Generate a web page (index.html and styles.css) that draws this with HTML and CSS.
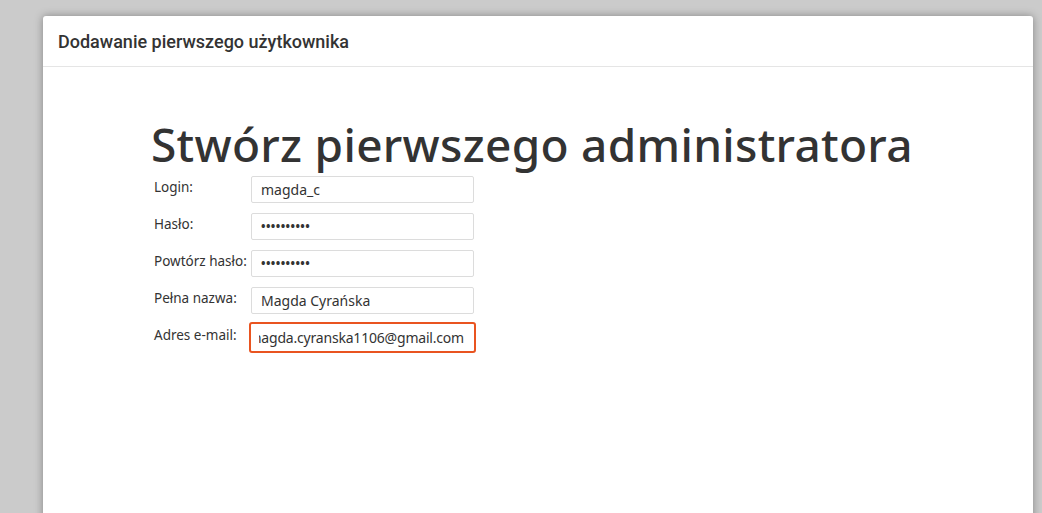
FILE: index.html
```html
<!DOCTYPE html>
<html lang="pl">
<head>
<meta charset="utf-8">
<link rel="stylesheet" href="styles.css">
</head>
<body>
<div class="dialog">
  <div class="dialog-header">Dodawanie pierwszego użytkownika</div>
  <div class="dialog-body">
    <h1 class="title">Stwórz pierwszego administratora</h1>
    <form class="form">
      <label class="label">Login:</label>
      <div class="field">magda_c</div>
      <label class="label">Hasło:</label>
      <div class="field dots">••••••••••</div>
      <label class="label">Powtórz hasło:</label>
      <div class="field dots">••••••••••</div>
      <label class="label">Pełna nazwa:</label>
      <div class="field">Magda Cyrańska</div>
      <label class="label">Adres e-mail:</label>
      <div class="field focused"><div class="scroll-box"><span class="scroll">magda.cyranska1106@gmail.com</span></div></div>
    </form>
  </div>
</div>
</body>
</html>
```
FILE: styles.css
```css
html, body { margin: 0; padding: 0; }
body {
  background: #cbcbcb;
  height: 513px;
  overflow: hidden;
  padding-top: 16px;
  box-sizing: border-box;
}
.dialog {
  margin-left: 43px;
  width: 990px;
  height: 520px;
  background: #fff;
  border-radius: 3px 3px 0 0;
  box-shadow: 0 0 8px rgba(0,0,0,0.35);
}
.dialog-header {
  height: 51px;
  box-sizing: border-box;
  border-bottom: 1px solid #e5e5e5;
  padding: 15px 0 0 15px;
  font-family: Roboto, "Liberation Sans", sans-serif;
  font-weight: 500;
  font-size: 18px;
  line-height: 22px;
  color: #333;
}
.dialog-body {
  padding: 48px 0 0 108px;
}
.title {
  margin: 0;
  font-family: "Noto Sans", sans-serif;
  font-weight: 500;
  font-size: 46px;
  line-height: 58px;
  color: #333;
  letter-spacing: 0.3px;
}
.form {
  display: grid;
  grid-template-columns: 97px 223px;
  row-gap: 10px;
  margin-top: 3px;
  margin-left: 3px;
  font-family: "Noto Sans", sans-serif;
  font-size: 13.5px;
  color: #333;
}
.label { padding-top: 2px; line-height: 18px; }
.field {
  height: 27px;
  box-sizing: border-box;
  border: 1px solid #dcdcdc;
  border-radius: 2px;
  padding: 0 9px;
  line-height: 25px;
  font-size: 14px;
  color: #333;
  overflow: hidden;
  white-space: nowrap;
}
.dots { font-size: 12px; letter-spacing: 0.4px; font-weight: 700; }
.focused {
  border: 2px solid #e95420;
  border-radius: 3px;
  height: 31px;
  margin: -2px 0 0 -2px;
  width: 227px;
  padding: 0 10px 0 8px;
  line-height: 27px;
}
.scroll-box {
  display: flex;
  justify-content: flex-end;
  overflow: hidden;
}
.scroll { flex: none; letter-spacing: -0.2px; }
```
